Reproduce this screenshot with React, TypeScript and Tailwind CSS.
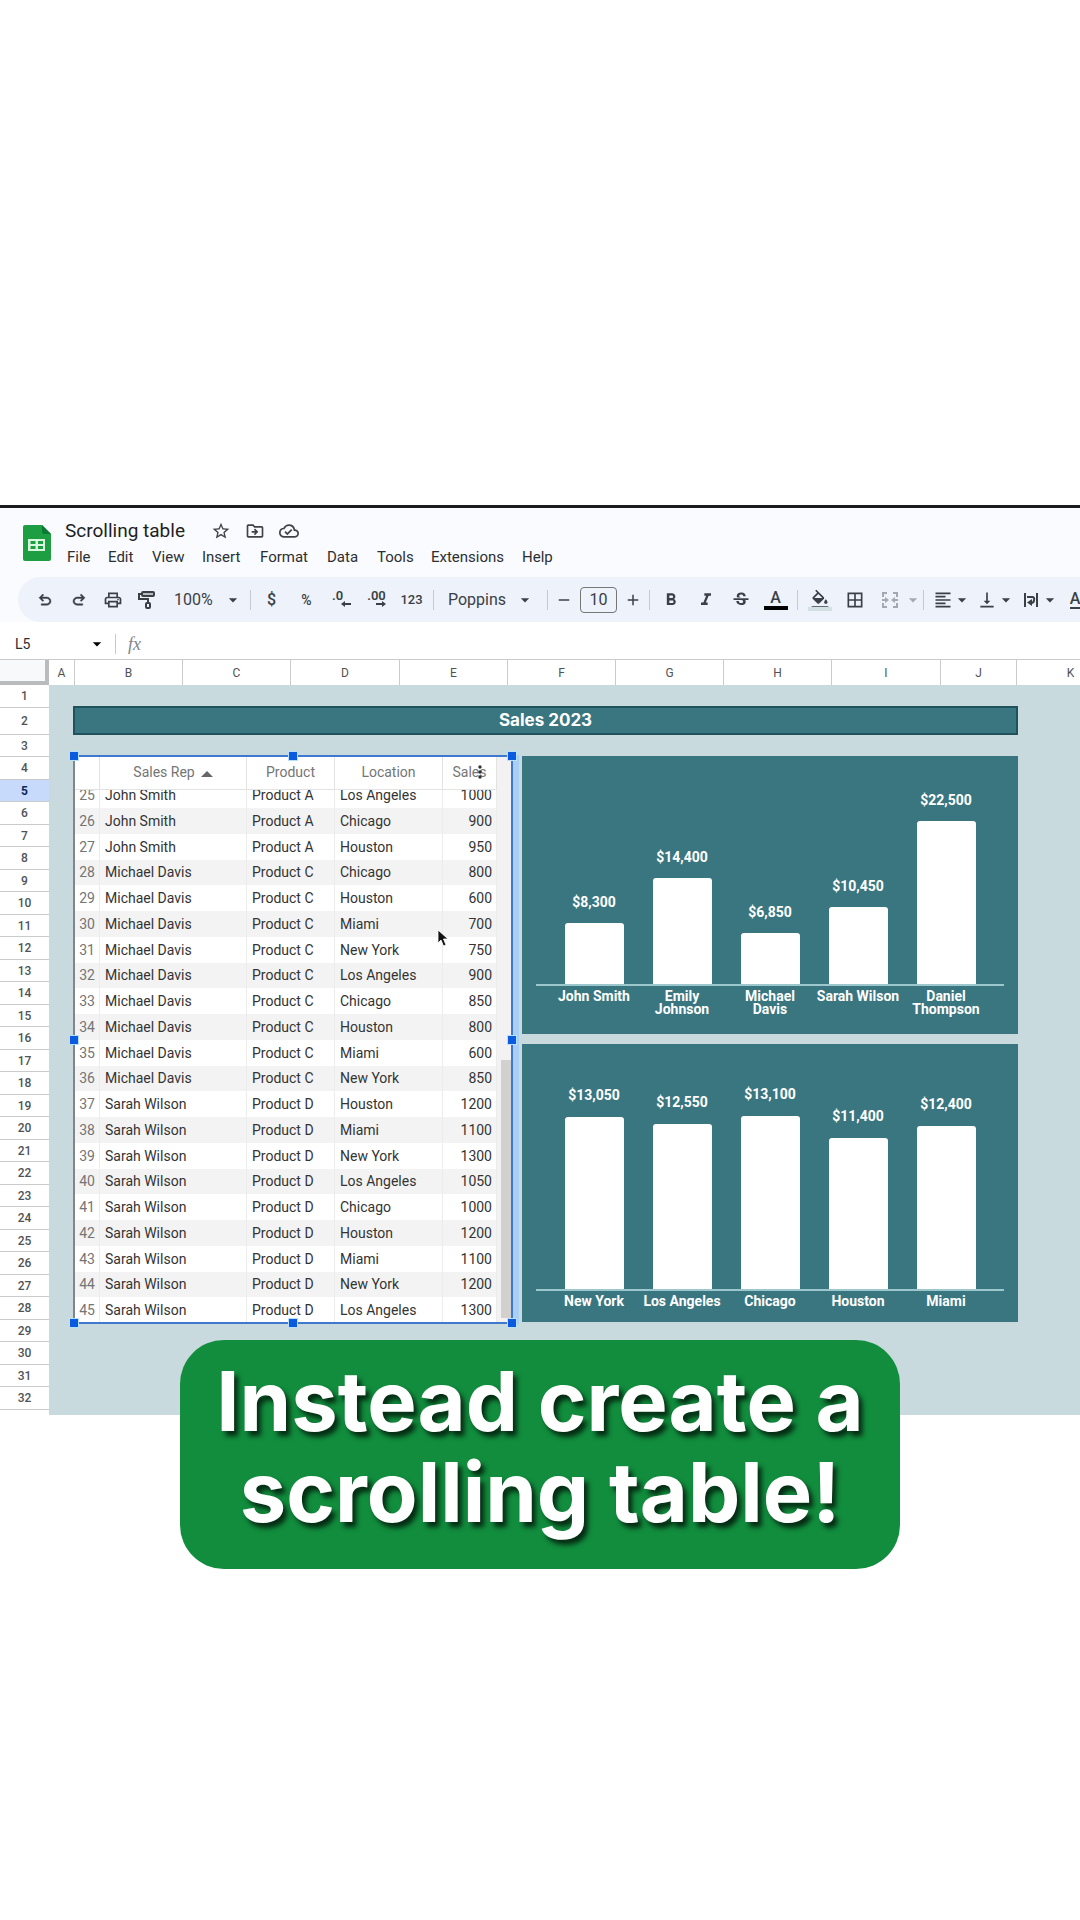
import type { ReactNode } from 'react';
import {
  MdAdd,
  MdArrowDropDown,
  MdBorderAll,
  MdFormatAlignLeft,
  MdFormatBold,
  MdFormatColorFill,
  MdFormatItalic,
  MdMoreVert,
  MdOutlineCloudDone,
  MdOutlineDriveFileMove,
  MdOutlinePrint,
  MdRemove,
  MdStarBorder,
  MdStrikethroughS,
  MdVerticalAlignBottom,
} from 'react-icons/md';

const menus = [
  { label: 'File', width: 'w-[41px]' },
  { label: 'Edit', width: 'w-[44px]' },
  { label: 'View', width: 'w-[50px]' },
  { label: 'Insert', width: 'w-[58px]' },
  { label: 'Format', width: 'w-[67px]' },
  { label: 'Data', width: 'w-[50px]' },
  { label: 'Tools', width: 'w-[54px]' },
  { label: 'Extensions', width: 'w-[91px]' },
  { label: 'Help', width: 'w-[40px]' },
];

const columns = [
  { name: 'A', width: 'w-[26px]' },
  { name: 'B', width: 'w-[108px]' },
  { name: 'C', width: 'w-[108px]' },
  { name: 'D', width: 'w-[109px]' },
  { name: 'E', width: 'w-[108px]' },
  { name: 'F', width: 'w-[108px]' },
  { name: 'G', width: 'w-[108px]' },
  { name: 'H', width: 'w-[108px]' },
  { name: 'I', width: 'w-[109px]' },
  { name: 'J', width: 'w-[76px]' },
  { name: 'K', width: 'w-[108px]' },
];

const lineNumbers = Array.from({ length: 32 }, (_, i) => i + 1);

const sales: [number, string, string, string, number][] = [
  [25, 'John Smith', 'Product A', 'Los Angeles', 1000],
  [26, 'John Smith', 'Product A', 'Chicago', 900],
  [27, 'John Smith', 'Product A', 'Houston', 950],
  [28, 'Michael Davis', 'Product C', 'Chicago', 800],
  [29, 'Michael Davis', 'Product C', 'Houston', 600],
  [30, 'Michael Davis', 'Product C', 'Miami', 700],
  [31, 'Michael Davis', 'Product C', 'New York', 750],
  [32, 'Michael Davis', 'Product C', 'Los Angeles', 900],
  [33, 'Michael Davis', 'Product C', 'Chicago', 850],
  [34, 'Michael Davis', 'Product C', 'Houston', 800],
  [35, 'Michael Davis', 'Product C', 'Miami', 600],
  [36, 'Michael Davis', 'Product C', 'New York', 850],
  [37, 'Sarah Wilson', 'Product D', 'Houston', 1200],
  [38, 'Sarah Wilson', 'Product D', 'Miami', 1100],
  [39, 'Sarah Wilson', 'Product D', 'New York', 1300],
  [40, 'Sarah Wilson', 'Product D', 'Los Angeles', 1050],
  [41, 'Sarah Wilson', 'Product D', 'Chicago', 1000],
  [42, 'Sarah Wilson', 'Product D', 'Houston', 1200],
  [43, 'Sarah Wilson', 'Product D', 'Miami', 1100],
  [44, 'Sarah Wilson', 'Product D', 'New York', 1200],
  [45, 'Sarah Wilson', 'Product D', 'Los Angeles', 1300],
];

type Bar = { label: string; value: string; height: number };

const byRep: Bar[] = [
  { label: 'John Smith', value: '$8,300', height: 61 },
  { label: 'Emily\nJohnson', value: '$14,400', height: 106 },
  { label: 'Michael\nDavis', value: '$6,850', height: 51 },
  { label: 'Sarah Wilson', value: '$10,450', height: 77 },
  { label: 'Daniel\nThompson', value: '$22,500', height: 163 },
];

const byCity: Bar[] = [
  { label: 'New York', value: '$13,050', height: 172 },
  { label: 'Los Angeles', value: '$12,550', height: 165 },
  { label: 'Chicago', value: '$13,100', height: 173 },
  { label: 'Houston', value: '$11,400', height: 151 },
  { label: 'Miami', value: '$12,400', height: 163 },
];

function SheetsLogo() {
  return (
    <svg className="h-9 w-7 shrink-0" viewBox="0 0 28 36">
      <path d="M2 0h17l9 9v25a2 2 0 0 1-2 2H2a2 2 0 0 1-2-2V2a2 2 0 0 1 2-2z" fill="#1e9e42" />
      <path d="M19 0l9 9h-7a2 2 0 0 1-2-2z" fill="#0c7a35" />
      <path
        d="M5 14h17v12H5zM7.500 16v3h5v-3zM15 16v3h5v-3zM7.500 21v3h5v-3zM15 21v3h5v-3z"
        fill="#d9f7dc"
        fillRule="evenodd"
      />
    </svg>
  );
}

function UndoIcon({ className = '' }: { className?: string }) {
  return (
    <svg className={`h-[18px] w-[18px] ${className}`} viewBox="0 -960 960 960" fill="currentColor">
      <path
        d="M280-200v-80h284q63 0 109.500-40T720-420q0-60-46.500-100T564-560H312l104 104-56 56-200-200 200-200 56 56-104 104h252q97 0 166.500 63T800-420q0 94-69.500 157T564-200H280Z"
        stroke="currentColor"
        strokeWidth="24"
      />
    </svg>
  );
}

function PaintRollerIcon() {
  return (
    <svg className="h-5 w-5" viewBox="0 0 20 20" fill="none" stroke="currentColor" strokeWidth="2">
      <rect x="5" y="2" width="12" height="4" rx="1" fill="currentColor" fillOpacity="0.3" />
      <path d="M5 4H2v5h9v4" />
      <rect x="9" y="13" width="4" height="5" rx="1" />
    </svg>
  );
}

function MergeIcon() {
  return (
    <svg className="h-5 w-5" viewBox="0 0 20 20" fill="none" stroke="currentColor" strokeWidth="2">
      <path d="M7 3H3v4M13 3h4v4M7 17H3v-4M13 17h4v-4M2 10h4M18 10h-4" />
      <path d="M5 7l4 3-4 3zM15 7l-4 3 4 3z" fill="currentColor" stroke="none" />
    </svg>
  );
}

function WrapIcon() {
  return (
    <svg className="h-4 w-4" viewBox="0 0 16 16" fill="none" stroke="currentColor" strokeWidth="2">
      <path d="M2 1v14M14 1v14M4 5h5a2 2 0 0 1 2 3 3 3 0 0 1-3 3" />
      <path d="M9 7v7l-5-3.500z" fill="currentColor" stroke="none" />
    </svg>
  );
}

function DecimalIcon({ digits, more = false }: { digits: string; more?: boolean }) {
  return (
    <span className={`relative -mt-2 text-[13px] leading-4 font-semibold ${more ? '' : 'mr-2'}`}>
      {digits}
      <svg
        className={`absolute top-3 h-2 w-[10px] ${more ? 'right-0 -scale-x-100' : '-right-2'}`}
        viewBox="0 0 10 8"
        fill="currentColor"
      >
        <path d="M0 4l4-3v2h6v2H4v2z" />
      </svg>
    </span>
  );
}

function Caret() {
  return <MdArrowDropDown className="h-5 w-5 shrink-0" />;
}

function Separator({ className }: { className: string }) {
  return <div className={`h-5 w-px shrink-0 bg-[#c4c9d2] ${className}`} />;
}

function ToolButton({ label, children }: { label: string; children: ReactNode }) {
  return (
    <button aria-label={label} className="flex h-8 w-[35px] shrink-0 items-center justify-center">
      {children}
    </button>
  );
}

function MenuToolButton({ label, children }: { label: string; children: ReactNode }) {
  return (
    <button aria-label={label} className="flex h-8 w-[44px] shrink-0 items-center">
      <span className="flex w-6 justify-center">{children}</span>
      <span className="flex w-[14px] justify-center">
        <Caret />
      </span>
    </button>
  );
}

function Toolbar() {
  return (
    <div className="ml-[18px] flex h-[45px] items-center overflow-hidden rounded-l-full bg-[#edf2fb] pl-[10px] text-[#3b4046]">
      <div className="flex shrink-0 [&>button]:w-[34px]">
        <ToolButton label="Undo">
          <UndoIcon />
        </ToolButton>
        <ToolButton label="Redo">
          <UndoIcon className="-scale-x-100" />
        </ToolButton>
        <ToolButton label="Print">
          <MdOutlinePrint className="h-5 w-5" />
        </ToolButton>
        <ToolButton label="Paint format">
          <PaintRollerIcon />
        </ToolButton>
      </div>
      <select aria-label="Zoom" className="ml-[10px] w-[49px] shrink-0 appearance-none text-base">
        <option>100%</option>
      </select>
      <Caret />
      <Separator className="mr-[3px] ml-[7px]" />
      <ToolButton label="Format as currency">
        <span className="text-base font-medium">$</span>
      </ToolButton>
      <ToolButton label="Format as percent">
        <span className="text-sm font-medium">%</span>
      </ToolButton>
      <ToolButton label="Decrease decimal places">
        <DecimalIcon digits=".0" />
      </ToolButton>
      <ToolButton label="Increase decimal places">
        <DecimalIcon digits=".00" more />
      </ToolButton>
      <ToolButton label="More formats">
        <span className="text-[13px] font-medium">123</span>
      </ToolButton>
      <Separator className="mx-1" />
      <select aria-label="Font" className="ml-[10px] w-[67px] shrink-0 appearance-none text-base">
        <option>Poppins</option>
      </select>
      <Caret />
      <Separator className="mr-1 ml-3" />
      <button aria-label="Decrease font size" className="flex w-6 shrink-0 justify-center">
        <MdRemove className="h-[18px] w-[18px]" />
      </button>
      <input
        aria-label="Font size"
        defaultValue="10"
        className="mx-1 h-[26px] w-[37px] shrink-0 rounded border border-[#747775] text-center text-base"
      />
      <button aria-label="Increase font size" className="flex w-6 shrink-0 justify-center">
        <MdAdd className="h-[18px] w-[18px]" />
      </button>
      <Separator className="mr-[3px] ml-1" />
      <ToolButton label="Bold">
        <MdFormatBold className="h-5 w-5" />
      </ToolButton>
      <ToolButton label="Italic">
        <MdFormatItalic className="h-5 w-5" />
      </ToolButton>
      <ToolButton label="Strikethrough">
        <MdStrikethroughS className="h-5 w-5" />
      </ToolButton>
      <ToolButton label="Text color">
        <span className="flex flex-col items-center text-base leading-4 font-medium">
          A
          <span className="h-1 w-6 bg-black" />
        </span>
      </ToolButton>
      <Separator className="mx-1" />
      <ToolButton label="Fill color">
        <span className="flex flex-col items-center">
          <MdFormatColorFill className="h-[18px] w-5" viewBox="0 0 24 20" />
          <span className="h-1 w-6 bg-[#d3e0e4]" />
        </span>
      </ToolButton>
      <ToolButton label="Borders">
        <MdBorderAll className="h-5 w-5" />
      </ToolButton>
      <button aria-label="Merge cells" className="flex shrink-0 items-center gap-[3px] pl-2 text-[#a4a8af]">
        <MergeIcon />
        <Caret />
      </button>
      <Separator className="mr-[7px]" />
      <MenuToolButton label="Horizontal align">
        <MdFormatAlignLeft className="h-5 w-5" />
      </MenuToolButton>
      <MenuToolButton label="Vertical align">
        <MdVerticalAlignBottom className="h-5 w-5" />
      </MenuToolButton>
      <MenuToolButton label="Text wrapping">
        <WrapIcon />
      </MenuToolButton>
      <MenuToolButton label="Text rotation">
        <span className="border-b-2 border-current text-base leading-4 font-medium">A</span>
      </MenuToolButton>
    </div>
  );
}

function Header() {
  return (
    <header className="border-t-[3px] border-[#1c1d1e] bg-[#f9fbfe]">
      <div className="flex h-[69px] items-center pl-[23px]">
        <SheetsLogo />
        <div className="ml-[14px] pt-1">
          <div className="flex items-center text-[#3f4347]">
            <h1 className="w-[146px] text-[19px] leading-6 text-[#1f1f1f]">Scrolling table</h1>
            <div className="flex gap-[14px]">
              <button aria-label="Star">
                <MdStarBorder className="h-5 w-5" />
              </button>
              <button aria-label="Move">
                <MdOutlineDriveFileMove className="h-5 w-5" />
              </button>
              <button aria-label="Document status">
                <MdOutlineCloudDone className="h-5 w-5" />
              </button>
            </div>
          </div>
          <nav className="flex pl-[2px] text-[15px] leading-7 text-[#2c2f32]">
            {menus.map((menu) => (
              <button key={menu.label} className={`text-left ${menu.width}`}>
                {menu.label}
              </button>
            ))}
          </nav>
        </div>
      </div>
      <Toolbar />
    </header>
  );
}

function FormulaBar() {
  return (
    <div className="flex h-[37px] items-center pt-[6px] pl-[15px]">
      <input aria-label="Name box" defaultValue="L5" className="w-[72px] text-sm text-[#2c2f32]" />
      <Caret />
      <Separator className="mx-2" />
      <span className="pl-1 font-['Liberation_Serif',serif] text-lg leading-5 text-[#80868b] italic">fx</span>
    </div>
  );
}

function ColumnHeadings() {
  return (
    <div className="flex h-[26px] overflow-hidden border-t border-[#c9cbcd] text-xs text-[#505356]">
      <div className="w-[49px] shrink-0 border-r-4 border-b-4 border-[#b9bbbd] bg-[#f8f9fa]" />
      {columns.map((column) => (
        <div
          key={column.name}
          className={`flex shrink-0 items-center justify-center border-r border-[#c9cbcd] ${column.width}`}
        >
          {column.name}
        </div>
      ))}
    </div>
  );
}

function RowHeadings() {
  return (
    <div className="w-[49px] shrink-0 bg-white pb-[5px] text-xs font-medium text-[#505356]">
      {lineNumbers.map((n) => (
        <div
          key={n}
          className={`flex items-center justify-center border-b border-[#c9cbcd] ${
            n === 2 ? 'h-[27px]' : n === 1 || n % 2 === 0 ? 'h-[23px]' : 'h-[22px]'
          } ${n === 5 ? 'bg-[#c8dafb] font-bold text-[#0b2a5c]' : ''}`}
        >
          {n}
        </div>
      ))}
    </div>
  );
}

function HeadCell({ width, children }: { width: string; children?: ReactNode }) {
  return (
    <th className={`border-r border-b border-[#e3e3e3] p-0 pb-[2px] text-center font-normal text-[#757575] ${width}`}>
      {children}
    </th>
  );
}

function Cell({ className = '', children }: { className?: string; children: ReactNode }) {
  return (
    <td className={`border-r border-[#ececec] p-0 ${className}`}>
      <div className="flex h-full flex-col justify-end overflow-hidden">
        <span className="leading-[26px]">{children}</span>
      </div>
    </td>
  );
}

function SalesTable() {
  return (
    <div className="flex h-[565px] overflow-hidden bg-white">
      <table className="w-[422px] shrink-0 table-fixed border-separate border-spacing-0 self-start text-sm text-[#333]">
        <thead>
          <tr className="h-[33px]">
            <HeadCell width="w-[25px]" />
            <HeadCell width="w-[147px]">
              <span className="inline-flex items-center gap-[6px]">
                Sales Rep
                <svg className="mt-1 h-[6px] w-3" viewBox="0 0 12 6" fill="#666">
                  <path d="M6 0l6 6H0z" />
                </svg>
              </span>
            </HeadCell>
            <HeadCell width="w-[88px]">Product</HeadCell>
            <HeadCell width="w-[108px]">Location</HeadCell>
            <HeadCell width="w-[54px]">
              <span className="relative">
                Sales
                <MdMoreVert className="absolute -top-[2px] -right-1 h-5 w-5 text-[#333]" />
              </span>
            </HeadCell>
          </tr>
        </thead>
        <tbody>
          {sales.map(([id, rep, product, city, amount]) => (
            <tr
              key={id}
              className={
                id === 25
                  ? '[&_td>div]:h-[18px]'
                  : 'even:bg-[#f3f3f3] [&_td>div]:h-[26px] nth-[4n]:[&_td>div]:h-[25px]'
              }
            >
              <Cell className="pr-1 text-right text-[#757575]">{id}</Cell>
              <Cell className="pl-[5px]">{rep}</Cell>
              <Cell className="pl-[5px]">{product}</Cell>
              <Cell className="pl-[5px]">{city}</Cell>
              <Cell className="pr-1 text-right">{amount}</Cell>
            </tr>
          ))}
        </tbody>
      </table>
      <div className="flex flex-1 flex-col justify-end bg-[#f3f1f1] pb-1 pl-1">
        <div className="h-[258px] bg-[#d3d0d0]" />
      </div>
    </div>
  );
}

function Handle({ className }: { className: string }) {
  return <span className={`absolute h-[10px] w-[10px] border border-[#b9e0fb] bg-[#0b5be0] ${className}`} />;
}

function SelectedTable() {
  return (
    <div className="relative w-[440px] shrink-0 self-start border-2 border-[#3f78cf] border-l-[#808689] shadow-[6px_0_0_#a9cff5]">
      <SalesTable />
      <Handle className="-top-[6px] -left-[6px]" />
      <Handle className="-top-[6px] left-1/2 -translate-x-1/2" />
      <Handle className="-top-[6px] -right-[6px]" />
      <Handle className="top-1/2 -left-[6px] -translate-y-1/2" />
      <Handle className="top-1/2 -right-[6px] -translate-y-1/2" />
      <Handle className="-bottom-[6px] -left-[6px]" />
      <Handle className="-bottom-[6px] left-1/2 -translate-x-1/2" />
      <Handle className="-right-[6px] -bottom-[6px]" />
      <svg className="absolute top-[172px] left-[362px] h-[18px] w-3" viewBox="0 0 12 18">
        <path
          d="M1 1v13l3-3 2.500 6 2.500-1-2.500-6H11z"
          fill="#111"
          stroke="#fff"
          strokeWidth="0.800"
        />
      </svg>
    </div>
  );
}

function BarChart({ bars, gap, footer }: { bars: Bar[]; gap: string; footer: string }) {
  return (
    <figure className="flex h-[278px] flex-col justify-end bg-[#3a767f] px-[14px] font-bold text-white">
      <div className="flex items-end border-b-2 border-[#9cc8cd] px-[14px]">
        {bars.map((bar) => (
          <div key={bar.label} className={`flex flex-1 flex-col items-center ${gap}`}>
            <span className="text-sm leading-4">{bar.value}</span>
            <div className="w-[59px] rounded-t-[3px] bg-white" style={{ height: bar.height }} />
          </div>
        ))}
      </div>
      <div className={`flex px-[14px] pt-1 text-center text-sm leading-[13px] ${footer}`}>
        {bars.map((bar) => (
          <div key={bar.label} className="flex-1 whitespace-pre-line">
            {bar.label}
          </div>
        ))}
      </div>
    </figure>
  );
}

export default function App() {
  return (
    <main className="overflow-hidden bg-white pt-[505px] font-[Roboto,sans-serif]">
      <Header />
      <FormulaBar />
      <ColumnHeadings />
      <div className="flex">
        <RowHeadings />
        <div className="flex-1 bg-[#c8dadd] pt-[21px] pl-6">
          <div className="w-[945px]">
            <h2 className="h-[29px] border-2 border-[#1f525b] bg-[#3a767f] text-center font-[Inter,sans-serif] text-[17px] leading-6 font-bold text-white">
              Sales 2023
            </h2>
            <div className="mt-5 flex justify-between">
              <SelectedTable />
              <div className="mt-px flex w-[496px] flex-col gap-[10px]">
                <BarChart bars={byRep} gap="gap-[13px]" footer="h-[48px]" />
                <BarChart bars={byCity} gap="gap-[14px]" footer="h-[31px]" />
              </div>
            </div>
          </div>
        </div>
      </div>
      <p className="relative mx-auto -mt-[75px] w-[720px] rounded-[44px] bg-[#118d3d] pt-4 pb-[31px] text-center font-[Inter,sans-serif] text-[83px] leading-[91px] font-bold text-white [text-shadow:4px_5px_5px_rgb(0_0_0/0.7)]">
        Instead create a
        <br />
        scrolling table!
      </p>
    </main>
  );
}
